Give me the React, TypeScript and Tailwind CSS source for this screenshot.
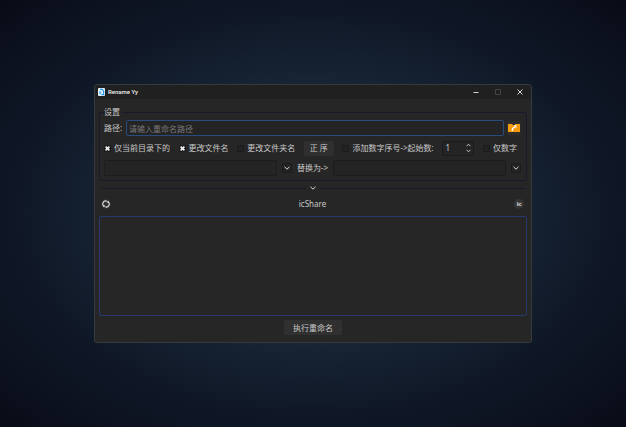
import { useState } from "react";

type CheckProps = {
  label: string;
  checked: boolean;
  onChange: (checked: boolean) => void;
};

const CheckItem = ({ label, checked, onChange }: CheckProps) => (
  <label className="flex items-center gap-[3px] whitespace-nowrap">
    <span className="relative flex h-[7px] w-[7px] shrink-0">
      <input
        type="checkbox"
        className="h-[7px] w-[7px] appearance-none rounded-[1px] border border-[#1b1b1d] bg-[#222222]"
        checked={checked}
        onChange={(e) => onChange(e.target.checked)}
      />
      {checked && (
        <svg viewBox="0 0 7 7" className="pointer-events-none absolute inset-0" stroke="#f0f0f0" strokeWidth="1.6">
          <path d="M1.6 1.6 5.4 5.4M5.4 1.6 1.6 5.4" />
        </svg>
      )}
    </span>
    {label}
  </label>
);

const ChevronDown = () => (
  <svg viewBox="0 0 6 6" className="h-1.5 w-1.5" fill="none" stroke="#d8d8d8" strokeWidth="1">
    <path d="M0.5 1.8 3 4.2 5.5 1.8" />
  </svg>
);

const HistoryButton = ({ label }: { label: string }) => (
  <button
    type="button"
    aria-label={label}
    className="flex h-2.5 w-2.5 shrink-0 items-center justify-center rounded-[2px] border border-[#1c1c1c] bg-[#232323]"
  >
    <ChevronDown />
  </button>
);

const TitleBar = () => (
  <header className="flex h-3.5 items-center rounded-t-[3px] bg-[#202020] pl-[3px] pr-2">
    <svg viewBox="0 0 7 8" className="mr-[3px] h-2 w-[7px]">
      <rect width="7" height="8" rx="1" fill="#e4f2fc" />
      <path d="M2 1.3h2L5.6 2.9V6.6H3.4" fill="none" stroke="#2196e8" strokeWidth="1.2" />
      <path d="M1.2 3.2h2v3h-2z" fill="#5bb6f2" />
    </svg>
    <h1 className="flex-1 font-[Roboto,sans-serif] text-[6px] font-medium text-[#f0f0f0]">Rename Yy</h1>
    <div className="flex items-center gap-4">
      <button type="button" aria-label="最小化">
        <svg viewBox="0 0 6 6" className="h-1.5 w-1.5" stroke="#d0d0d0">
          <path d="M0.5 3.5h5" />
        </svg>
      </button>
      <button type="button" aria-label="最大化" disabled>
        <svg viewBox="0 0 6 6" className="h-1.5 w-1.5" fill="none" stroke="#444444">
          <path d="M0.5 0.5h5v5h-5z" />
        </svg>
      </button>
      <button type="button" aria-label="关闭">
        <svg viewBox="0 0 6 6" className="h-1.5 w-1.5" stroke="#d8d8d8">
          <path d="M0.5 0.5 5.5 5.5M5.5 0.5 0.5 5.5" />
        </svg>
      </button>
    </div>
  </header>
);

const App = () => {
  const [path, setPath] = useState("");
  const [currentOnly, setCurrentOnly] = useState(true);
  const [renameFiles, setRenameFiles] = useState(true);
  const [renameFolders, setRenameFolders] = useState(false);
  const [addNumber, setAddNumber] = useState(false);
  const [numberOnly, setNumberOnly] = useState(false);
  const [ascending, setAscending] = useState(true);
  const [start, setStart] = useState(1);
  const [search, setSearch] = useState("");
  const [replace, setReplace] = useState("");

  return (
    <div className="flex min-h-screen items-center justify-center bg-[radial-gradient(ellipse_at_center,#1c2f3f_0%,#172535_42%,#0f1726_68%,#090c17_100%)] font-['Noto_Sans','Noto_Sans_CJK_SC',sans-serif] text-[8px] leading-[10px] text-[#c8c8c8]">
      <main className="w-[70%] rounded-[3px] border border-[#373a3c] bg-[#262626]">
        <TitleBar />

        <div className="flex flex-col px-1 pb-[7px] pt-2">
          {/* Settings */}
          <fieldset className="min-w-0 rounded-[2px] border border-[#1a182c] pb-1 pl-1 pr-[5px]">
            <legend className="pr-0.5">设置</legend>
            <div className="flex flex-col gap-1 pt-[3px]">
              <div className="flex items-center gap-[3px]">
                <label htmlFor="path" className="mr-px whitespace-nowrap">路径:</label>
                <input
                  id="path"
                  type="text"
                  placeholder="请输入重命名路径"
                  className="h-4 min-w-0 flex-1 rounded-[2px] border border-[#264c80] bg-[#242424] px-0.5 outline-none placeholder:text-[#777777]"
                  value={path}
                  onChange={(e) => setPath(e.target.value)}
                />
                <button
                  type="button"
                  aria-label="选择文件夹"
                  className="flex h-3.5 w-3.5 items-center justify-center rounded-[2px] bg-[#2d2d2d]"
                >
                  <svg viewBox="0 0 12 10" className="h-2.5 w-3">
                    <path d="M0 1h4l1 1h2V1h5v8H0z" fill="#f59a0c" />
                    <path d="M4.4 8V6.2Q4.6 4.6 6.8 4.2" fill="none" stroke="#ffffff" strokeWidth="1.4" />
                    <path d="M5.6 2.2H8.4V5.4z" fill="#ffffff" />
                  </svg>
                </button>
              </div>

              <div className="flex h-4 items-center justify-between pr-1">
                <CheckItem label="仅当前目录下的" checked={currentOnly} onChange={setCurrentOnly} />
                <CheckItem label="更改文件名" checked={renameFiles} onChange={setRenameFiles} />
                <CheckItem label="更改文件夹名" checked={renameFolders} onChange={setRenameFolders} />
                <button
                  type="button"
                  className="h-[15px] w-[30px] rounded-[2px] bg-[#2f2f2f]"
                  onClick={() => setAscending(!ascending)}
                >
                  {ascending ? "正 序" : "倒 序"}
                </button>
                <CheckItem label="添加数字序号->起始数:" checked={addNumber} onChange={setAddNumber} />
                <div className="flex h-[15px] w-8 items-center justify-between rounded-[2px] border border-[#1c1c1c] bg-[#242424] px-0.5">
                  <input
                    type="text"
                    inputMode="numeric"
                    aria-label="起始数"
                    className="w-4 bg-transparent outline-none"
                    value={start}
                    onChange={(e) => setStart(Number(e.target.value) || 0)}
                  />
                  <div className="flex flex-col gap-0.5">
                    <button type="button" aria-label="增加" onClick={() => setStart(start + 1)}>
                      <svg viewBox="0 0 5 4" className="h-1 w-[5px]" fill="none" stroke="#c8c8c8">
                        <path d="M0.5 3.2 2.5 1.2 4.5 3.2" />
                      </svg>
                    </button>
                    <button type="button" aria-label="减少" onClick={() => setStart(start - 1)}>
                      <svg viewBox="0 0 5 4" className="h-1 w-[5px]" fill="none" stroke="#c8c8c8">
                        <path d="M0.5 0.8 2.5 2.8 4.5 0.8" />
                      </svg>
                    </button>
                  </div>
                </div>
                <CheckItem label="仅数字" checked={numberOnly} onChange={setNumberOnly} />
              </div>

              <div className="flex items-center gap-[5px]">
                <input
                  type="text"
                  aria-label="查找"
                  className="h-4 min-w-0 flex-1 rounded-[2px] border border-[#1c1c1c] bg-[#242424] px-0.5 outline-none"
                  value={search}
                  onChange={(e) => setSearch(e.target.value)}
                />
                <HistoryButton label="查找记录" />
                <label htmlFor="replace" className="whitespace-nowrap">替换为-&gt;</label>
                <input
                  id="replace"
                  type="text"
                  className="h-4 min-w-0 flex-1 rounded-[2px] border border-[#1c1c1c] bg-[#242424] px-0.5 outline-none"
                  value={replace}
                  onChange={(e) => setReplace(e.target.value)}
                />
                <HistoryButton label="替换记录" />
              </div>
            </div>
          </fieldset>

          {/* Collapse divider */}
          <div className="mt-1 flex items-center gap-1 px-0.5">
            <span className="h-px flex-1 bg-[#1b1a2b]" />
            <button type="button" aria-label="折叠设置">
              <ChevronDown />
            </button>
            <span className="h-px flex-1 bg-[#1b1a2b]" />
          </div>

          {/* Toolbar */}
          <div className="flex h-[25px] items-center justify-between pl-0.5 pr-[3px]">
            <button
              type="button"
              aria-label="刷新"
              className="flex h-2.5 w-2.5 items-center justify-center rounded-full bg-[#303030]"
            >
              <svg viewBox="0 0 8 8" className="h-2 w-2" fill="none" stroke="#e4e4e4">
                <path d="M2.1 6.3A2.9 2.9 0 0 1 4.8 1.2M5.9 1.7A2.9 2.9 0 0 1 3.2 6.8" strokeWidth="1.1" />
                <path d="M1 6.6H2.6V5.2M7 1.4H5.4V2.8" strokeWidth="0.7" />
              </svg>
            </button>
            <span>icShare</span>
            <button
              type="button"
              className="flex h-2.5 w-2.5 items-center justify-center rounded-full bg-[#353535] text-[6px] font-bold text-[#e0e0e0]"
            >
              ic
            </button>
          </div>

          <ul className="h-[100px] rounded-[2px] border border-[#25396b]" />

          <button type="button" className="mt-1 h-[15px] self-center rounded-[2px] bg-[#303030] px-[9px]">
            执行重命名
          </button>
        </div>
      </main>
    </div>
  );
};

export default App;
